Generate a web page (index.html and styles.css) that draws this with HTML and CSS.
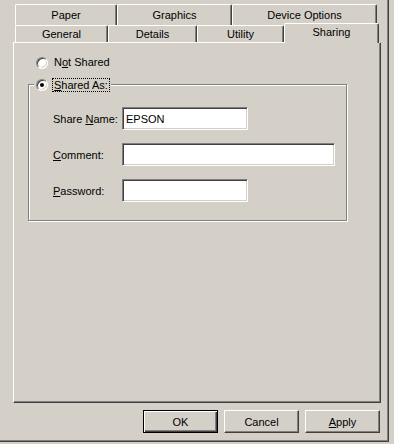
FILE: index.html
```html
<!DOCTYPE html>
<html>
<head>
<meta charset="utf-8">
<link rel="stylesheet" href="styles.css">
</head>
<body>
<div class="window">
  <div class="tabs">
    <div class="tab-row back">
      <div class="tab w-paper">Paper</div>
      <div class="tab w-graphics">Graphics</div>
      <div class="tab w-device">Device Options</div>
    </div>
    <div class="tab-row front">
      <div class="tab w-general">General</div>
      <div class="tab w-details">Details</div>
      <div class="tab w-utility">Utility</div>
      <div class="tab w-sharing selected">Sharing</div>
    </div>
  </div>
  <div class="panel">
    <div class="radio-row first">
      <span class="radio"></span>
      <span class="radio-label">N<u>o</u>t Shared</span>
    </div>
    <div class="group">
      <div class="legend">
        <span class="radio checked"></span>
        <span class="radio-label focus"><u>S</u>hared As:</span>
      </div>
      <div class="field-row first-field">
        <span class="field-label">Share <u>N</u>ame:</span>
        <input class="field short" type="text" value="EPSON">
      </div>
      <div class="field-row">
        <span class="field-label"><u>C</u>omment:</span>
        <input class="field long" type="text" value="">
      </div>
      <div class="field-row">
        <span class="field-label"><u>P</u>assword:</span>
        <input class="field short" type="text" value="">
      </div>
    </div>
  </div>
  <div class="buttons">
    <div class="btn default">OK</div>
    <div class="btn">Cancel</div>
    <div class="btn"><u>A</u>pply</div>
  </div>
</div>
</body>
</html>
```
FILE: styles.css
```css
html, body {
  margin: 0;
  padding: 0;
  background: #d4d0c8;
}
body {
  font-family: "Liberation Sans", Arial, sans-serif;
  font-size: 11px;
  color: #000;
  width: 394px;
  height: 444px;
  overflow: hidden;
}
.window {
  box-sizing: border-box;
  width: 389px;
  height: 442px;
  padding: 4px 0 0 13px;
  border-right: 1px solid #404040;
  border-bottom: 1px solid #404040;
  box-shadow: inset -1px -1px 0 #808080;
}
.tabs {
  margin-left: 2px;
  display: flex;
  flex-direction: column;
}
.tab-row {
  display: flex;
}
.tab {
  box-sizing: border-box;
  display: flex;
  align-items: center;
  justify-content: center;
  background: #d4d0c8;
  border-left: 1px solid #fff;
  border-top: 1px solid #fff;
  border-right: 1px solid #404040;
  border-radius: 2px 2px 0 0;
  box-shadow: inset -1px 0 0 #808080;
  white-space: nowrap;
}
.back .tab {
  height: 21px;
  padding-bottom: 1px;
}
.front .tab {
  height: 17px;
  padding-top: 0;
}
.w-paper { width: 102px; }
.w-graphics { width: 115px; }
.w-device { width: 145px; }
.w-general { width: 93px; }
.w-details { width: 89px; }
.w-utility { width: 87px; }
.w-sharing { width: 95px; }
.tab.selected {
  position: relative;
  z-index: 2;
  height: 20px;
  margin-top: -2px;
  margin-bottom: -1px;
  padding-bottom: 3px;
}
.panel {
  box-sizing: border-box;
  width: 368px;
  height: 361px;
  border-left: 1px solid #fff;
  border-top: 1px solid #fff;
  border-right: 1px solid #404040;
  border-bottom: 1px solid #404040;
  box-shadow: inset -1px -1px 0 #808080;
  display: flex;
  flex-direction: column;
  align-items: flex-start;
}
.radio-row {
  display: flex;
  align-items: center;
  height: 13px;
}
.radio-row.first {
  margin: 13px 0 0 22px;
}
.radio {
  box-sizing: border-box;
  width: 12px;
  height: 12px;
  border-radius: 50%;
  background: #fff;
  border: 1px solid;
  border-color: #808080 #fff #fff #808080;
  box-shadow: inset 1px 1px 0 #404040, inset -1px -1px 0 #d4d0c8;
  display: flex;
  align-items: center;
  justify-content: center;
  flex: none;
}
.radio.checked::after {
  content: "";
  width: 4px;
  height: 4px;
  border-radius: 50%;
  background: #000;
}
.radio-label {
  margin-left: 6px;
  line-height: 13px;
  white-space: nowrap;
}
.group {
  box-sizing: border-box;
  margin: 15px 0 0 14px;
  width: 319px;
  height: 137px;
  border: 1px solid #808080;
  box-shadow: inset 1px 1px 0 #fff, 1px 1px 0 #fff;
  display: flex;
  flex-direction: column;
  align-items: flex-start;
}
.legend {
  display: flex;
  align-items: center;
  height: 13px;
  margin: -7px 0 0 5px;
  padding: 0 2px;
  background: #d4d0c8;
}
.legend .radio-label {
  margin-left: 5px;
  padding: 0 1px;
  line-height: 12px;
}
.focus {
  outline: 1px dotted #000;
}
.field-row {
  display: flex;
  align-items: center;
  height: 23px;
  margin: 13px 0 0 24px;
}
.field-row.first-field {
  margin-top: 16px;
}
.field-label {
  width: 69px;
  white-space: nowrap;
}
.field {
  box-sizing: border-box;
  height: 23px;
  margin: 0;
  padding: 0 0 0 3px;
  font-family: "Liberation Sans", Arial, sans-serif;
  font-size: 11px;
  color: #000;
  background: #fff;
  border: 1px solid;
  border-color: #808080 #fff #fff #808080;
  box-shadow: inset 1px 1px 0 #404040, inset -1px -1px 0 #d4d0c8;
  outline: none;
}
.field.short { width: 126px; }
.field.long { width: 213px; }
.buttons {
  box-sizing: border-box;
  width: 368px;
  margin-top: 7px;
  padding-right: 1px;
  display: flex;
  justify-content: flex-end;
  gap: 6px;
}
.btn {
  box-sizing: border-box;
  width: 75px;
  height: 23px;
  display: flex;
  align-items: center;
  justify-content: center;
  border: 1px solid;
  border-color: #fff #404040 #404040 #fff;
  box-shadow: inset -1px -1px 0 #808080;
}
.btn.default {
  border-color: #000;
  box-shadow: inset 1px 1px 0 #fff, inset -1px -1px 0 #404040, inset -2px -2px 0 #808080;
}
```
